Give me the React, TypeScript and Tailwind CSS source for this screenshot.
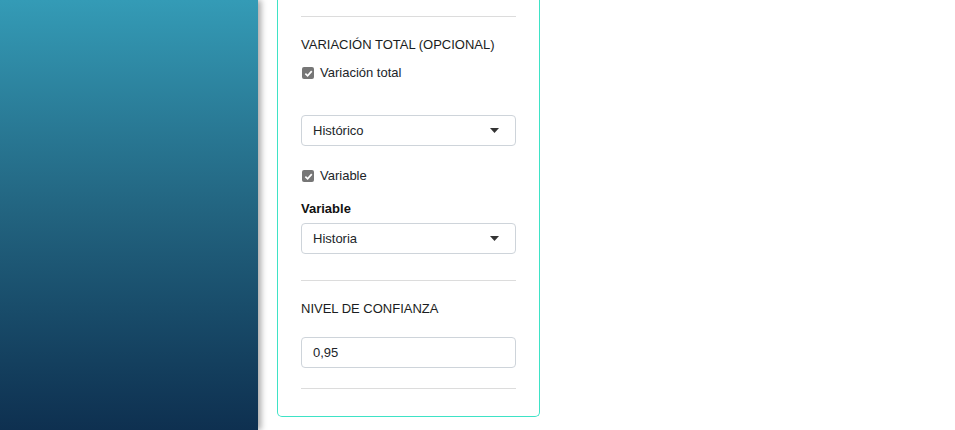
import React from 'react';

const Check: React.FC<{ label: string }> = ({ label }) => (
  <label className="flex items-center h-5 text-[13px] text-[#212529]">
    <span className="ml-[1px] w-[12px] h-[12px] rounded-[2px] bg-[#767676] flex items-center justify-center">
      <svg width="9" height="9" viewBox="0 0 10 10">
        <path d="M1.5 5.2 L4 7.6 L8.6 2.4" fill="none" stroke="#fff" strokeWidth="1.9" />
      </svg>
    </span>
    <span className="ml-[6px]">{label}</span>
  </label>
);

const Select: React.FC<{ value: string; className?: string }> = ({ value, className }) => (
  <div
    className={`h-[31px] flex items-center justify-between border border-[#ced4da] rounded-[4px] pl-[11px] pr-[16px] text-[13px] text-[#212529] ${className ?? ''}`}
  >
    <span>{value}</span>
    <svg width="9" height="5" viewBox="0 0 9 5">
      <path d="M0 0 H9 L4.5 5 Z" fill="#333" />
    </svg>
  </div>
);

const Divider: React.FC<{ className?: string }> = ({ className }) => (
  <div className={`h-px bg-[#dcdcdc] ${className ?? ''}`} />
);

export default function App() {
  return (
    <div className="flex h-[430px] bg-white" style={{ fontFamily: '"Liberation Sans", Arial, sans-serif' }}>
      <aside className="w-[258px] h-full shrink-0 bg-gradient-to-b from-[#349bb6] via-[#22637f] to-[#0e3050] shadow-[3px_0_6px_rgba(0,0,0,0.35)]" />
      <div className="ml-[19px] w-[263px] self-start border border-t-0 border-[#3ee3c6] rounded-b-[5px] px-[23px] pt-4 pb-[27px]">
        <Divider />
        <div className="mt-[18px] h-5 leading-5 text-[13px] text-[#1a1d21] uppercase">Variación total (opcional)</div>
        <div className="mt-[8px]">
          <Check label="Variación total" />
        </div>
        <Select value="Histórico" className="mt-[32px]" />
        <div className="mt-[20px]">
          <Check label="Variable" />
        </div>
        <div className="mt-[13px] h-5 leading-5 text-[13px] font-bold text-[#111]">Variable</div>
        <Select value="Historia" className="mt-[4px]" />
        <Divider className="mt-[26px]" />
        <div className="mt-[18px] h-5 leading-5 text-[13px] text-[#1a1d21] uppercase">Nivel de confianza</div>
        <div className="mt-[18px] h-[31px] flex items-center border border-[#ced4da] rounded-[4px] pl-[11px] text-[13px] text-[#212529]">
          0,95
        </div>
        <Divider className="mt-[20px]" />
      </div>
    </div>
  );
}
